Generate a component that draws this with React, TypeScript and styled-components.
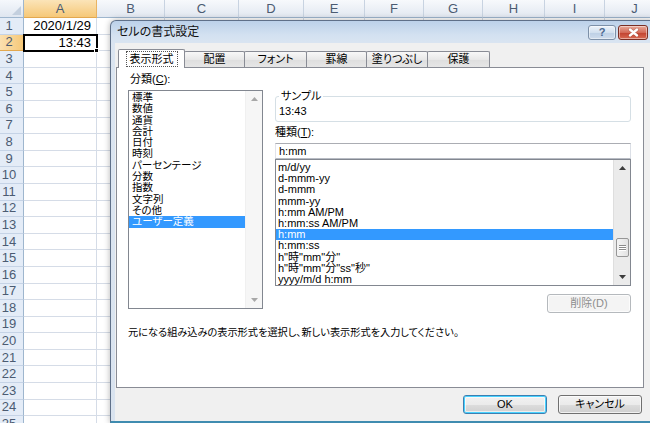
import React from 'react';
import styled, { createGlobalStyle, css } from 'styled-components';

const GlobalStyle = createGlobalStyle`
  html, body {
    margin: 0;
    padding: 0;
  }
  body {
    width: 650px;
    height: 423px;
    overflow: hidden;
    background: #fff;
    font-family: "Liberation Sans", "Noto Sans CJK JP", sans-serif;
  }
`;

const COLUMNS = [
  { key: 'A', width: 73 },
  { key: 'B', width: 68 },
  { key: 'C', width: 74 },
  { key: 'D', width: 65 },
  { key: 'E', width: 61 },
  { key: 'F', width: 59 },
  { key: 'G', width: 59 },
  { key: 'H', width: 62 },
  { key: 'I', width: 60 },
  { key: 'J', width: 60 },
];

const ROW_COUNT = 25;

const CELL_VALUES: Record<string, string> = {
  A1: '2020/1/29',
  A2: '13:43',
};

const CATEGORIES = [
  '標準',
  '数値',
  '通貨',
  '会計',
  '日付',
  '時刻',
  'パーセンテージ',
  '分数',
  '指数',
  '文字列',
  'その他',
  'ユーザー定義',
];

const FORMATS = [
  'm/d/yy',
  'd-mmm-yy',
  'd-mmm',
  'mmm-yy',
  'h:mm AM/PM',
  'h:mm:ss AM/PM',
  'h:mm',
  'h:mm:ss',
  'h"時"mm"分"',
  'h"時"mm"分"ss"秒"',
  'yyyy/m/d h:mm',
];

const TABS = [
  { label: '表示形式', width: 67 },
  { label: '配置', width: 61 },
  { label: 'フォント', width: 63 },
  { label: '罫線', width: 61 },
  { label: '塗りつぶし', width: 62 },
  { label: '保護', width: 63 },
];

const Screen = styled.div`
  position: relative;
  width: 650px;
  height: 423px;
  overflow: hidden;
`;

/* ---------- spreadsheet behind the dialog ---------- */

const Sheet = styled.div`
  display: grid;
  grid-template-columns: 24px ${COLUMNS.map((c) => `${c.width}px`).join(' ')};
  grid-template-rows: 18px;
  grid-auto-rows: 16.6px;
  font-family: "Liberation Sans", "Noto Sans CJK JP", sans-serif;
  font-size: 13px;
  color: #000;
`;

const Corner = styled.div`
  position: relative;
  box-sizing: border-box;
  background: linear-gradient(#f5f8fc, #dfe6f0);
  border-right: 1px solid #9eb6ce;
  border-bottom: 1px solid #9eb6ce;

  &::after {
    content: '';
    position: absolute;
    right: 2px;
    bottom: 2px;
    border-left: 9px solid transparent;
    border-bottom: 9px solid #c3cfde;
  }
`;

const ColHeader = styled.div<{ $active?: boolean }>`
  box-sizing: border-box;
  display: flex;
  align-items: center;
  justify-content: center;
  color: #4b5b72;
  background: ${({ $active }) =>
    $active ? 'linear-gradient(#fbe4b8, #f6c878)' : 'linear-gradient(#f7f9fc, #e2e8f1)'};
  border-right: 1px solid ${({ $active }) => ($active ? '#e9b463' : '#c8d3e1')};
  border-bottom: 1px solid ${({ $active }) => ($active ? '#e3a84f' : '#9eb6ce')};
`;

const RowHeader = styled.div<{ $active?: boolean }>`
  box-sizing: border-box;
  display: flex;
  align-items: center;
  justify-content: center;
  padding-right: 5px;
  line-height: 16px;
  overflow: hidden;
  color: #4b5b72;
  background: ${({ $active }) => ($active ? 'linear-gradient(90deg, #fbe0b0, #f6c878)' : '#e4ecf7')};
  border-right: 1px solid #9eb6ce;
  border-bottom: 1px solid ${({ $active }) => ($active ? '#e3a84f' : '#c5d3e6')};
`;

const Cell = styled.div<{ $selected?: boolean }>`
  position: relative;
  box-sizing: border-box;
  border-right: 1px solid #d5dce7;
  border-bottom: 1px solid #d5dce7;
  padding-right: 5px;
  text-align: right;
  line-height: 16px;
  white-space: nowrap;

  ${({ $selected }) =>
    $selected &&
    css`
      z-index: 1;
      outline: 2px solid #000;
      outline-offset: -1px;

      &::after {
        content: '';
        position: absolute;
        right: -3px;
        bottom: -3px;
        width: 5px;
        height: 5px;
        background: #000;
        border: 1px solid #fff;
        box-sizing: border-box;
      }
    `}
`;

/* ---------- dialog ---------- */

const Dialog = styled.div`
  position: absolute;
  left: 110px;
  top: 20px;
  width: 546px;
  height: 403px;
  box-sizing: border-box;
  display: flex;
  flex-direction: column;
  padding: 0 4px;
  border: 1px solid #5f7089;
  border-bottom: 2px solid #3f8cb0;
  border-radius: 6px 6px 0 0;
  background: linear-gradient(#bcd1ea 0, #d3e1f1 14px, #dbe5f1 24px, #d9e3ef 100%);
  box-shadow: 0 0 6px rgba(0, 0, 0, 0.3);
  font-family: "Liberation Sans", "Noto Sans CJK JP", sans-serif;
  font-size: 11px;
  font-feature-settings: "palt";
  color: #000;
`;

const TitleBar = styled.div`
  height: 22px;
  display: flex;
  align-items: center;
  padding: 0 3px 0 2px;
`;

const Title = styled.div`
  flex: 1;
  font-size: 12px;
  line-height: 16px;
  color: #111;
`;

const CaptionButton = styled.div<{ $close?: boolean }>`
  box-sizing: border-box;
  width: ${({ $close }) => ($close ? 30 : 28)}px;
  height: 15px;
  margin-left: 2px;
  display: flex;
  align-items: center;
  justify-content: center;
  border-radius: 3px;
  border: 1px solid ${({ $close }) => ($close ? '#7a2e24' : '#7d90a8')};
  background: ${({ $close }) =>
    $close
      ? 'linear-gradient(#e9aa9a, #d36a58 50%, #c1412f 51%, #d86a52)'
      : 'linear-gradient(#edf3fa, #d2e0ef 50%, #bccfe5 51%, #cfdcec)'};
  box-shadow: inset 0 0 0 1px rgba(255, 255, 255, 0.45);
  color: #4a6890;
  font-weight: bold;
  font-size: 11px;
  line-height: 1;
`;

const Client = styled.div`
  flex: 1;
  display: flex;
  flex-direction: column;
  background: #f0f0f0;
  padding: 6px 7px 0 1px;
`;

const TabStrip = styled.div`
  position: relative;
  z-index: 1;
  height: 18px;
  display: flex;
  align-items: flex-end;
  padding-left: 2px;
`;

const Tab = styled.div<{ $active?: boolean; $width: number }>`
  box-sizing: border-box;
  width: ${({ $width }) => $width}px;
  height: ${({ $active }) => ($active ? 19 : 16)}px;
  margin-bottom: ${({ $active }) => ($active ? -1 : 0)}px;
  display: flex;
  align-items: center;
  justify-content: center;
  border: 1px solid #898c95;
  border-bottom: none;
  border-radius: 2px 2px 0 0;
  background: ${({ $active }) => ($active ? '#fff' : 'linear-gradient(#f8f8f8, #e8e8e8 50%, #dedede 51%, #e6e6e6)')};
  line-height: 13px;

  & + & {
    margin-left: -1px;
  }
`;

const FocusLabel = styled.span`
  padding: 1px 3px 0;
  border: 1px dotted #555;
  margin-top: -1px;
`;

const Panel = styled.div`
  box-sizing: border-box;
  height: 321px;
  background: #fff;
  border: 1px solid #898c95;
  padding: 5px 0 0 11px;
`;

const Columns = styled.div`
  display: grid;
  grid-template-columns: 135px 356px;
  column-gap: 12px;
  align-items: start;
`;

const Column = styled.div`
  display: flex;
  flex-direction: column;
`;

const FieldLabel = styled.div<{ $indent?: number; $gap?: number }>`
  line-height: 13px;
  margin-left: ${({ $indent = 0 }) => $indent}px;
  margin-top: ${({ $gap = 0 }) => $gap}px;
`;

const ListBox = styled.div<{ $height: number; $gap?: number }>`
  box-sizing: border-box;
  height: ${({ $height }) => $height}px;
  margin-top: ${({ $gap = 0 }) => $gap}px;
  display: flex;
  border: 1px solid #828790;
  background: #fff;
  overflow: hidden;
`;

const Items = styled.div<{ $padTop: number; $lineHeight: number; $size: number }>`
  flex: 1;
  padding-top: ${({ $padTop }) => $padTop}px;
  font-size: ${({ $size }) => $size}px;
  line-height: ${({ $lineHeight }) => $lineHeight}px;
  white-space: nowrap;
  overflow: hidden;
`;

const Item = styled.div<{ $selected?: boolean; $inset: number }>`
  padding-left: ${({ $inset }) => $inset}px;
  background: ${({ $selected }) => ($selected ? '#3399ff' : 'transparent')};
  color: ${({ $selected }) => ($selected ? '#fff' : '#000')};
`;

const ScrollBar = styled.div<{ $enabled?: boolean }>`
  width: 16px;
  display: flex;
  flex-direction: column;
  background: ${({ $enabled }) => ($enabled ? '#ebebeb' : '#f6f6f6')};
  border-left: 1px solid ${({ $enabled }) => ($enabled ? '#dedede' : '#f0f0f0')};
  color: ${({ $enabled }) => ($enabled ? '#3c3c3c' : '#a8a8a8')};
`;

const ArrowBox = styled.div`
  height: 16px;
  display: flex;
  align-items: center;
  justify-content: center;
`;

const Track = styled.div`
  flex: 1;
  display: flex;
  flex-direction: column;
  align-items: center;
`;

const Thumb = styled.div<{ $offset: number }>`
  box-sizing: border-box;
  margin-top: ${({ $offset }) => $offset}px;
  width: 13px;
  height: 19px;
  border: 1px solid #979797;
  border-radius: 2px;
  background: linear-gradient(90deg, #f4f4f4, #e2e2e2);
  display: flex;
  flex-direction: column;
  align-items: center;
  justify-content: center;
  gap: 1px;
`;

const Grip = styled.div`
  width: 7px;
  height: 1px;
  background: #8a8a8a;
  box-shadow: 0 1px 0 #fff;
`;

const SampleBox = styled.fieldset`
  margin: 17px 0 0;
  padding: 2px 3px 3px;
  border: 1px solid #d5dfe5;
  border-radius: 3px;
  min-width: 0;
`;

const Legend = styled.legend`
  padding: 0 2px;
  line-height: 13px;
`;

const SampleValue = styled.div`
  line-height: 13px;
`;

const FormatInput = styled.div`
  box-sizing: border-box;
  margin-top: 4px;
  height: 16px;
  padding-left: 3px;
  border: 1px solid #abadb3;
  border-color: #abadb3 #dbdfe6 #b8bcc4 #e2e3ea;
  line-height: 14px;
  background: #fff;
`;

const PushButton = styled.div<{ $default?: boolean; $disabled?: boolean }>`
  box-sizing: border-box;
  width: 84px;
  height: 19px;
  display: flex;
  align-items: center;
  justify-content: center;
  border-radius: 3px;
  border: 1px solid ${({ $default, $disabled }) => ($default ? '#3c7fb1' : $disabled ? '#b5b9bd' : '#707070')};
  background: ${({ $disabled }) =>
    $disabled ? '#f4f4f4' : 'linear-gradient(#f2f2f2, #ebebeb 50%, #dddddd 51%, #cfcfcf)'};
  box-shadow: ${({ $default }) =>
    $default ? 'inset 0 0 0 1px #48d2ff, inset 0 0 0 2px rgba(255,255,255,0.6)' : 'inset 0 0 0 1px rgba(255,255,255,0.7)'};
  color: ${({ $disabled }) => ($disabled ? '#8d8d8d' : '#000')};
  line-height: 13px;
`;

const DeleteRow = styled.div`
  display: flex;
  justify-content: flex-end;
  margin-top: 8px;
`;

const Hint = styled.div`
  margin-top: 13px;
  font-size: 10.2px;
  line-height: 13px;
`;

const ButtonRow = styled.div`
  display: flex;
  justify-content: flex-end;
  gap: 11px;
  margin-top: 7px;
  padding-right: 2px;
`;

const Arrow: React.FC<{ down?: boolean }> = ({ down }) => (
  <svg width="7" height="4" viewBox="0 0 7 4" fill="currentColor">
    <polygon points={down ? '0,0 7,0 3.5,4' : '3.5,0 7,4 0,4'} />
  </svg>
);

const CloseGlyph: React.FC = () => (
  <svg width="11" height="9" viewBox="0 0 11 9">
    <path d="M2 1.5 L9 7.5 M9 1.5 L2 7.5" stroke="#6b2418" strokeWidth="3.4" strokeLinecap="round" opacity="0.35" />
    <path d="M2 1.5 L9 7.5 M9 1.5 L2 7.5" stroke="#fff" strokeWidth="2.4" strokeLinecap="round" />
  </svg>
);

const App: React.FC = () => {
  const rows = Array.from({ length: ROW_COUNT }, (_, i) => i + 1);

  return (
    <Screen>
      <GlobalStyle />
      <Sheet>
        <Corner />
        {COLUMNS.map((col) => (
          <ColHeader key={col.key} $active={col.key === 'A'}>
            {col.key}
          </ColHeader>
        ))}
        {rows.map((row) => (
          <React.Fragment key={row}>
            <RowHeader $active={row === 2}>{row}</RowHeader>
            {COLUMNS.map((col) => {
              const id = `${col.key}${row}`;
              return (
                <Cell key={id} $selected={id === 'A2'}>
                  {CELL_VALUES[id] ?? ''}
                </Cell>
              );
            })}
          </React.Fragment>
        ))}
      </Sheet>

      <Dialog>
        <TitleBar>
          <Title>セルの書式設定</Title>
          <CaptionButton>?</CaptionButton>
          <CaptionButton $close>
            <CloseGlyph />
          </CaptionButton>
        </TitleBar>

        <Client>
          <TabStrip>
            {TABS.map((tab, i) => (
              <Tab key={tab.label} $width={tab.width} $active={i === 0}>
                {i === 0 ? <FocusLabel>{tab.label}</FocusLabel> : tab.label}
              </Tab>
            ))}
          </TabStrip>

          <Panel>
            <Columns>
              <Column>
                <FieldLabel $indent={2}>
                  分類(<u>C</u>):
                </FieldLabel>
                <ListBox $height={219} $gap={4}>
                  <Items $padTop={1} $lineHeight={11.3} $size={10.5}>
                    {CATEGORIES.map((c) => (
                      <Item key={c} $inset={3} $selected={c === 'ユーザー定義'}>
                        {c}
                      </Item>
                    ))}
                  </Items>
                  <ScrollBar>
                    <ArrowBox>
                      <Arrow />
                    </ArrowBox>
                    <Track />
                    <ArrowBox>
                      <Arrow down />
                    </ArrowBox>
                  </ScrollBar>
                </ListBox>
              </Column>

              <Column>
                <SampleBox>
                  <Legend>サンプル</Legend>
                  <SampleValue>13:43</SampleValue>
                </SampleBox>
                <FieldLabel $gap={4}>
                  種類(<u>T</u>):
                </FieldLabel>
                <FormatInput>h:mm</FormatInput>
                <ListBox $height={127}>
                  <Items $padTop={2} $lineHeight={11.2} $size={11}>
                    {FORMATS.map((f) => (
                      <Item key={f} $inset={2} $selected={f === 'h:mm'}>
                        {f}
                      </Item>
                    ))}
                  </Items>
                  <ScrollBar $enabled>
                    <ArrowBox>
                      <Arrow />
                    </ArrowBox>
                    <Track>
                      <Thumb $offset={62}>
                        <Grip />
                        <Grip />
                        <Grip />
                      </Thumb>
                    </Track>
                    <ArrowBox>
                      <Arrow down />
                    </ArrowBox>
                  </ScrollBar>
                </ListBox>
                <DeleteRow>
                  <PushButton $disabled>削除(D)</PushButton>
                </DeleteRow>
              </Column>
            </Columns>
            <Hint>元になる組み込みの表示形式を選択し、新しい表示形式を入力してください。</Hint>
          </Panel>

          <ButtonRow>
            <PushButton $default>OK</PushButton>
            <PushButton>キャンセル</PushButton>
          </ButtonRow>
        </Client>
      </Dialog>
    </Screen>
  );
};

export default App;
